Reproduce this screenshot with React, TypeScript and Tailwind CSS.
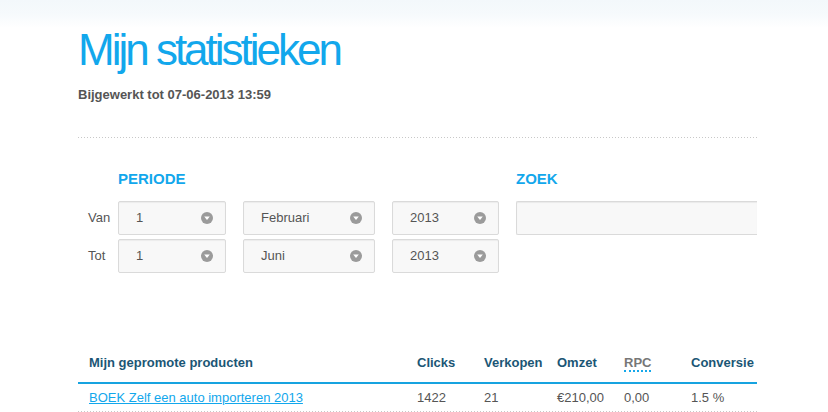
const DOTS = 'h-px bg-[repeating-linear-gradient(to_right,#c8c8c8_0_1px,transparent_1px_3px)]';

function Arrow() {
  return (
    <svg width="12" height="12" viewBox="0 0 12 12" className="shrink-0">
      <circle cx="6" cy="6" r="6" fill="#9b9b9b" />
      <path d="M3.2 4.6h5.6L6 8.1z" fill="#fff" />
    </svg>
  );
}

function Select({ value, width, className = '' }: { value: string; width: string; className?: string }) {
  return (
    <div
      className={`${width} ${className} h-[34px] flex items-center justify-between pl-[17px] pr-[12px] bg-[#f8f8f8] border border-[#dadada] rounded-[2px] shadow-[inset_0_1px_1px_rgba(0,0,0,0.05)] text-[13px] text-[#555]`}
    >
      <span>{value}</span>
      <Arrow />
    </div>
  );
}

const COLS = 'grid grid-cols-[339px_67px_73px_67px_67px_66px]';

export default function App() {
  return (
    <div className="w-[828px] h-[412px] overflow-hidden bg-white font-['Liberation_Sans',Arial,sans-serif]">
      <div className="h-[28px] bg-gradient-to-b from-[#f3f8fb] via-[#f6fafc] to-white" />

      <div className="ml-[78px] w-[679px]">
        <h1 className="text-[44px] leading-[44px] tracking-[-3px] text-[#12a7ec]">Mijn statistieken</h1>
        <p className="mt-[15px] text-[13px] leading-[16px] font-bold text-[#555]">Bijgewerkt tot 07-06-2013 13:59</p>

        <div className={`mt-[34px] ${DOTS}`} />

        {/* filters */}
        <div className="mt-[32px] flex text-[15px] leading-[18px] font-bold text-[#12a7ec]">
          <div className="w-[40px]" />
          <div className="w-[398px]">PERIODE</div>
          <div>ZOEK</div>
        </div>

        <div className="mt-[13px] flex items-center">
          <span className="w-[40px] pl-[10px] text-[13px] text-[#555]">Van</span>
          <Select value="1" width="w-[108px]" />
          <Select value="Februari" width="w-[132px]" className="ml-[17px]" />
          <Select value="2013" width="w-[107px]" className="ml-[17px]" />
          <div className="ml-[17px] flex-1 h-[34px] bg-[#f8f8f8] border border-r-0 border-[#dadada] rounded-l-[2px] shadow-[inset_0_1px_1px_rgba(0,0,0,0.06)]" />
        </div>
        <div className="mt-[4px] flex items-center">
          <span className="w-[40px] pl-[10px] text-[13px] text-[#555]">Tot</span>
          <Select value="1" width="w-[108px]" />
          <Select value="Juni" width="w-[132px]" className="ml-[17px]" />
          <Select value="2013" width="w-[107px]" className="ml-[17px]" />
        </div>

        {/* table */}
        <div className={`mt-[82px] ${COLS} pb-[10px] border-b-2 border-[#16a3e0] text-[13px] leading-[16px] font-bold text-[#1b5675]`}>
          <div className="pl-[11px]">Mijn gepromote producten</div>
          <div>Clicks</div>
          <div>Verkopen</div>
          <div>Omzet</div>
          <div>
            <span className="inline-block leading-[13px] pb-px border-b-2 border-dotted border-[#16a8ea] text-[#777]">RPC</span>
          </div>
          <div>Conversie</div>
        </div>
        <div className={`${COLS} h-[27px] items-center text-[13px] leading-[16px] text-[#555]`}>
          <a href="#" className="pl-[11px] text-[#12a7ec] underline">BOEK Zelf een auto importeren 2013</a>
          <div>1422</div>
          <div>21</div>
          <div>€210,00</div>
          <div>0,00</div>
          <div>1.5 %</div>
        </div>
        <div className={DOTS} />
      </div>
    </div>
  );
}
